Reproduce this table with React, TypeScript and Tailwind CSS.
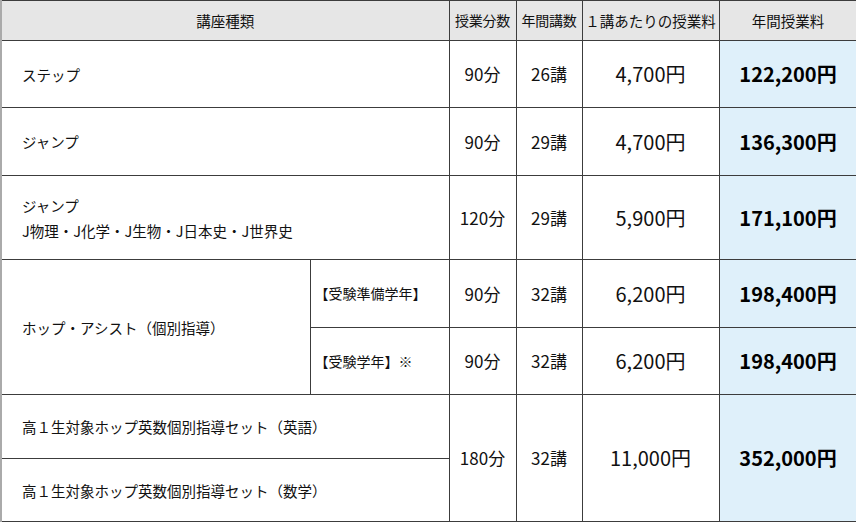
import React from 'react';

const FONT = "font-['Noto_Sans_CJK_JP','Noto_Sans',sans-serif]";

const cell = 'border border-[#3c3c3c] text-[#111]';
const nameCell = `${cell} pl-5 text-left text-[14.5px] leading-[25px]`;
const numCell = `${cell} text-center text-[17px]`;
const priceCell = `${cell} text-center text-[20px]`;
const totalCell = `${cell} bg-[#dff0fa] text-center text-[20px] font-bold text-black`;

export default function App() {
  return (
    <div className={`w-[856px] h-[523px] bg-white ${FONT}`}>
      <table className="w-[856px] table-fixed border-collapse border-l-2 border-l-[#aaa]">
        <colgroup>
          <col className="w-[309px]" />
          <col className="w-[139px]" />
          <col className="w-[67px]" />
          <col className="w-[66px]" />
          <col className="w-[137px]" />
          <col className="w-[138px]" />
        </colgroup>
        <thead>
          <tr className="h-[40px] bg-[#e6e6e6]">
            <th colSpan={2} className={`${cell} font-normal text-[14.5px]`}>講座種類</th>
            <th className={`${cell} font-normal text-[14px] px-0 tracking-[-0.3px]`}>授業分数</th>
            <th className={`${cell} font-normal text-[14px] px-0 tracking-[-0.3px]`}>年間講数</th>
            <th className={`${cell} font-normal text-[14.5px]`}>１講あたりの授業料</th>
            <th className={`${cell} font-normal text-[14.5px]`}>年間授業料</th>
          </tr>
        </thead>
        <tbody>
          <tr className="h-[67px]">
            <td colSpan={2} className={nameCell}>ステップ</td>
            <td className={numCell}>90分</td>
            <td className={numCell}>26講</td>
            <td className={priceCell}>4,700円</td>
            <td className={totalCell}>122,200円</td>
          </tr>
          <tr className="h-[68px]">
            <td colSpan={2} className={nameCell}>ジャンプ</td>
            <td className={numCell}>90分</td>
            <td className={numCell}>29講</td>
            <td className={priceCell}>4,700円</td>
            <td className={totalCell}>136,300円</td>
          </tr>
          <tr className="h-[84px]">
            <td colSpan={2} className={nameCell}>
              ジャンプ
              <br />
              J物理・J化学・J生物・J日本史・J世界史
            </td>
            <td className={numCell}>120分</td>
            <td className={numCell}>29講</td>
            <td className={priceCell}>5,900円</td>
            <td className={totalCell}>171,100円</td>
          </tr>
          <tr className="h-[68px]">
            <td rowSpan={2} className={nameCell}>ホップ・アシスト（個別指導）</td>
            <td className={`${cell} pl-1 text-left text-[14px]`}>【受験準備学年】</td>
            <td className={numCell}>90分</td>
            <td className={numCell}>32講</td>
            <td className={priceCell}>6,200円</td>
            <td className={totalCell}>198,400円</td>
          </tr>
          <tr className="h-[67px]">
            <td className={`${cell} pl-1 text-left text-[14px]`}>【受験学年】※</td>
            <td className={numCell}>90分</td>
            <td className={numCell}>32講</td>
            <td className={priceCell}>6,200円</td>
            <td className={totalCell}>198,400円</td>
          </tr>
          <tr className="h-[64px]">
            <td colSpan={2} className={nameCell}>高１生対象ホップ英数個別指導セット（英語）</td>
            <td rowSpan={2} className={numCell}>180分</td>
            <td rowSpan={2} className={numCell}>32講</td>
            <td rowSpan={2} className={priceCell}>11,000円</td>
            <td rowSpan={2} className={totalCell}>352,000円</td>
          </tr>
          <tr className="h-[63px]">
            <td colSpan={2} className={nameCell}>高１生対象ホップ英数個別指導セット（数学）</td>
          </tr>
        </tbody>
      </table>
    </div>
  );
}
